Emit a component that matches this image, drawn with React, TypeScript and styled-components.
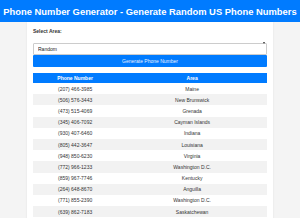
import styled, { createGlobalStyle } from "styled-components";

const rows: [string, string][] = [
  ["(207) 466-3985", "Maine"],
  ["(506) 576-3443", "New Brunswick"],
  ["(473) 515-4069", "Grenada"],
  ["(345) 406-7092", "Cayman Islands"],
  ["(930) 407-6460", "Indiana"],
  ["(805) 442-3647", "Louisiana"],
  ["(948) 850-6230", "Virginia"],
  ["(772) 966-1233", "Washington D.C."],
  ["(859) 967-7746", "Kentucky"],
  ["(264) 648-8670", "Anguilla"],
  ["(771) 855-2390", "Washington D.C."],
  ["(639) 862-7183", "Saskatchewan"],
];

const GlobalStyle = createGlobalStyle`
  html, body {
    margin: 0;
    padding: 0;
    background: #f4f4f4;
    font-family: "Liberation Sans", Arial, sans-serif;
    color: #333;
  }
`;

const Header = styled.header`
  background: #007bff;
  color: #fff;
  height: 22px;
  display: flex;
  align-items: center;
  justify-content: center;

  h1 {
    margin: 0;
    font-size: 9.4px;
    font-weight: bold;
    white-space: nowrap;
  }
`;

const Container = styled.main`
  width: 246px;
  margin: 0 auto;
  background: #fff;
  padding: 6px;
  box-sizing: border-box;
  box-shadow: 0 0 2px rgba(0, 0, 0, 0.08);
  display: flex;
  flex-direction: column;
`;

const Label = styled.label`
  font-size: 5px;
  font-weight: bold;
  line-height: 6px;
  margin-bottom: 3px;
`;

const SelectWrap = styled.div`
  position: relative;
  height: 12px;
  margin-bottom: 6px;
`;

const Select = styled.select`
  appearance: none;
  width: 100%;
  height: 12px;
  box-sizing: border-box;
  border: 1px solid #ccc;
  border-radius: 1px;
  background: #fff;
  font-family: inherit;
  font-size: 5px;
  color: #222;
  padding: 0 0 0 4px;
  outline: none;
`;

const Caret = styled.span`
  position: absolute;
  right: 2px;
  top: 5px;
  width: 0;
  height: 0;
  border-left: 1.5px solid transparent;
  border-right: 1.5px solid transparent;
  border-top: 2px solid #333;
  pointer-events: none;
`;

const Button = styled.button`
  height: 12px;
  border: none;
  border-radius: 1px;
  background: #007bff;
  color: #e8f1ff;
  font-family: inherit;
  font-size: 5px;
  padding: 0;
  margin-bottom: 6px;
  cursor: pointer;
`;

const Table = styled.table`
  width: 100%;
  border-collapse: collapse;
  font-size: 5px;

  th {
    background: #007bff;
    color: #fff;
    font-weight: bold;
    height: 10px;
    padding: 0;
  }

  th:first-child {
    width: 36%;
  }

  td {
    height: 11.2px;
    padding: 0;
    text-align: center;
    color: #333;
  }

  tbody tr:nth-child(even) td {
    background: #f2f2f2;
  }
`;

export default function App() {
  return (
    <>
      <GlobalStyle />
      <Header>
        <h1>Phone Number Generator - Generate Random US Phone Numbers</h1>
      </Header>
      <Container>
        <Label htmlFor="area">Select Area:</Label>
        <SelectWrap>
          <Select id="area" defaultValue="random">
            <option value="random">Random</option>
          </Select>
          <Caret />
        </SelectWrap>
        <Button>Generate Phone Number</Button>
        <Table>
          <thead>
            <tr>
              <th>Phone Number</th>
              <th>Area</th>
            </tr>
          </thead>
          <tbody>
            {rows.map(([phone, area]) => (
              <tr key={phone}>
                <td>{phone}</td>
                <td>{area}</td>
              </tr>
            ))}
          </tbody>
        </Table>
      </Container>
    </>
  );
}
